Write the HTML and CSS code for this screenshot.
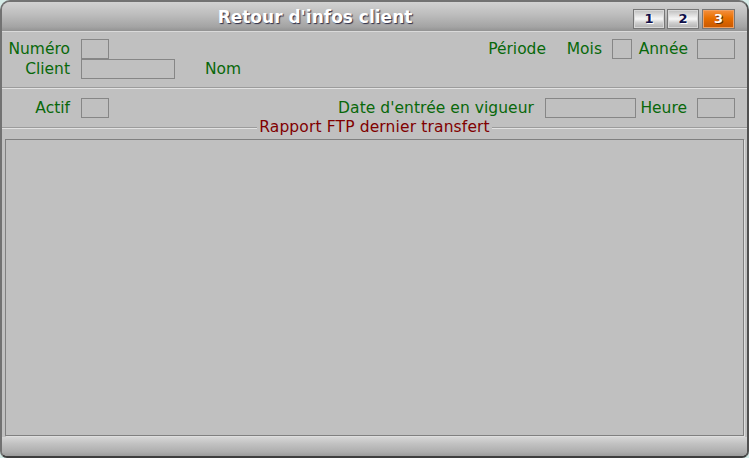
FILE: index.html
```html
<!DOCTYPE html>
<html lang="fr">
<head>
<meta charset="utf-8">
<title>Retour d'infos client</title>
<link rel="stylesheet" href="styles.css">
</head>
<body>
<div class="window">
  <div class="titlebar">
    <div class="title">Retour d'infos client</div>
    <div class="tabs">
      <span class="tab">1</span>
      <span class="tab">2</span>
      <span class="tab active">3</span>
    </div>
  </div>
  <div class="form">
    <div class="row">
      <span class="lbl lead">Numéro</span>
      <span class="box w28"></span>
      <div class="right">
        <span class="lbl l-periode">Période</span>
        <span class="lbl l-mois">Mois</span>
        <span class="box w20"></span>
        <span class="lbl l-annee">Année</span>
        <span class="box w38"></span>
      </div>
    </div>
    <div class="row">
      <span class="lbl lead">Client</span>
      <span class="box w94"></span>
      <span class="lbl l-nom">Nom</span>
    </div>
    <div class="sep sep1"></div>
    <div class="row row3">
      <span class="lbl lead">Actif</span>
      <span class="box w28"></span>
      <div class="right">
        <span class="lbl l-date">Date d'entrée en vigueur</span>
        <span class="box w91"></span>
        <span class="lbl l-heure">Heure</span>
        <span class="box w38"></span>
      </div>
    </div>
    <div class="group-title"><span class="gline"></span><span class="gtext">Rapport FTP dernier transfert</span><span class="gline"></span></div>
  </div>
  <div class="report"></div>
  <div class="statusbar"></div>
</div>
</body>
</html>
```

FILE: styles.css
```css
html, body {
  margin: 0;
  padding: 0;
  background: #d6ece8;
}

.window {
  width: 749px;
  height: 458px;
  box-sizing: border-box;
  border: 2px solid #727272;
  border-right-color: #505050;
  border-bottom-color: #3e3e3e;
  border-radius: 10px 10px 7px 7px;
  background: #c0c0c0;
  display: flex;
  flex-direction: column;
  overflow: hidden;
  font-family: "DejaVu Sans", Verdana, sans-serif;
  font-size: 15.5px;
}

.titlebar {
  height: 29px;
  flex: none;
  border-bottom: 1px solid #dadada;
  background: linear-gradient(#d2d2d2, #bcbcbc 45%, #a4a4a4 85%, #939393);
  display: flex;
}

.title {
  flex: 1;
  text-align: center;
  color: #ffffff;
  font-weight: bold;
  font-size: 17px;
  line-height: 30px;
  text-shadow: 1px 1px 1px #2e2e48;
}

.tabs {
  display: flex;
  align-self: flex-end;
  margin: 0 12px 2px 5px;
  gap: 2px;
}

.tab {
  box-sizing: border-box;
  width: 32px;
  height: 20px;
  border: 1px solid #767676;
  box-shadow: inset 0 0 0 1px #d8d8d8;
  background: linear-gradient(#bdbdbd, #ececec 40%, #f6f6f6 50%, #d0d0d0 70%, #b0b0b0);
  color: #10104a;
  font-weight: bold;
  font-size: 13px;
  line-height: 18px;
  text-align: center;
  text-shadow: 1px 1px 0 #ffffff;
}

.tab.active {
  width: 33px;
  margin-left: 1px;
  background: linear-gradient(#f49040, #e87000 45%, #d86200 70%, #c85800);
  box-shadow: inset 0 0 0 1px #f0a060;
  color: #ffffff;
  text-shadow: 1px 1px 0 #5a3010;
}

.form {
  flex: none;
  padding-top: 7px;
}

.row {
  display: flex;
  align-items: center;
  height: 20px;
}

.lbl {
  color: #08680a;
  white-space: nowrap;
  line-height: 20px;
}

.lead {
  width: 68px;
  margin-right: 11px;
  text-align: right;
}

.box {
  box-sizing: border-box;
  height: 20px;
  border: 1px solid #868686;
  flex: none;
}

.w20 { width: 20px; }
.w28 { width: 28px; }
.w38 { width: 38px; }
.w91 { width: 91px; }
.w94 { width: 94px; }

.right {
  margin-left: auto;
  margin-right: 12px;
  display: flex;
  align-items: center;
}

.l-periode { width: 58px; text-align: right; margin-right: 20px; }
.l-mois { width: 36px; text-align: right; margin-right: 10px; }
.l-annee { width: 50px; margin-left: 6px; margin-right: 9px; text-align: right; }
.l-nom { margin-left: 30px; }
.l-date { text-align: right; margin-right: 11px; letter-spacing: 0.05px; }
.l-heure { width: 47px; margin-left: 4px; margin-right: 10px; text-align: right; }

.sep {
  height: 0;
  border-top: 1px solid #9c9c9c;
  border-bottom: 1px solid #e2e2e2;
}

.sep1 { margin-top: 8px; }
.row3 { margin-top: 9px; }

.group-title {
  display: flex;
  align-items: center;
  height: 18px;
}

.gline {
  flex: 1;
  height: 0;
  margin-top: 1px;
  border-top: 1px solid #9c9c9c;
  border-bottom: 1px solid #e2e2e2;
}

.gtext {
  color: #800000;
  padding: 0 2px;
  white-space: nowrap;
  line-height: 18px;
  letter-spacing: 0.14px;
}

.report {
  flex: 1;
  margin: 3px 3px 0 3px;
  border: 1px solid #808080;
  box-shadow: 1px 1px 0 #dedede;
}

.statusbar {
  flex: none;
  height: 19px;
  margin-top: 1px;
  background: linear-gradient(#d6d6d6, #c2c2c2 35%, #adadad 80%, #9c9c9c);
}
```
